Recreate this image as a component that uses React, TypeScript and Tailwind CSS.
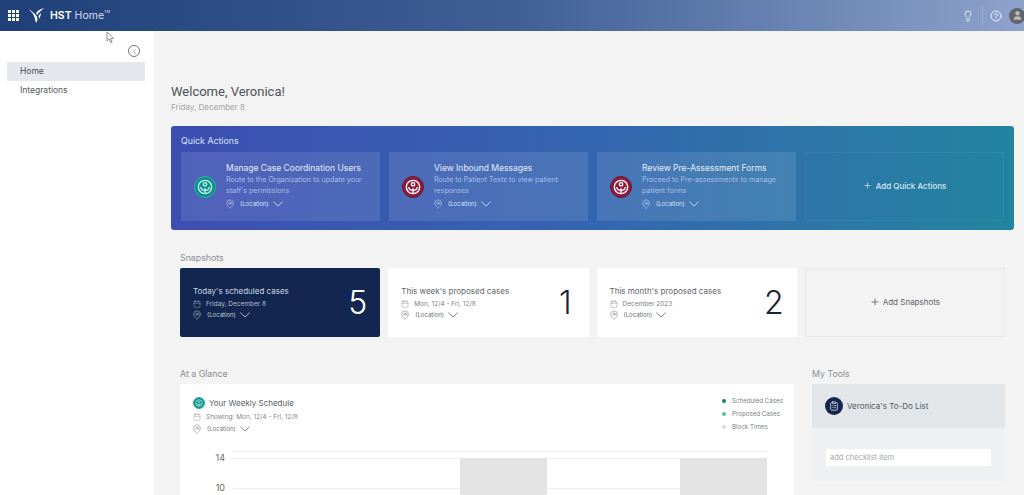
import { Lightbulb, CircleHelp, User, ChevronLeft, MapPin, Calendar, Plus, ClipboardList } from 'lucide-react';

const quickActions = [
  { title: 'Manage Case Coordination Users', lines: ['Route to the Organization to update your', "staff's permissions"], teal: true },
  { title: 'View Inbound Messages', lines: ['Route to Patient Texts to view patient', 'responses'], teal: false },
  { title: 'Review Pre-Assessment Forms', lines: ['Proceed to Pre-assessments to manage', 'patient forms'], teal: false },
];

const snapshots = [
  { title: "Today's scheduled cases", date: 'Friday, December 8', count: '5', dark: true, pad: 'pr-[13px]' },
  { title: "This week's proposed cases", date: 'Mon, 12/4 - Fri, 12/8', count: '1', dark: false, pad: 'pr-[17px]' },
  { title: "This month's proposed cases", date: 'December 2023', count: '2', dark: false, pad: 'pr-[13px]' },
];

const legend = [
  { label: 'Scheduled Cases', dot: 'bg-[#12826f]' },
  { label: 'Proposed Cases', dot: 'bg-[#5cbf9c]' },
  { label: 'Block Times', dot: 'bg-[#dcdcdc]' },
];

function AppGrid() {
  return (
    <svg width="11" height="11" viewBox="0 0 11 11" fill="white">
      {[0, 4, 8].map((y) =>
        [0, 4, 8].map((x) => <rect key={`${x}-${y}`} x={x} y={y} width="3" height="3" />)
      )}
    </svg>
  );
}

function LogoMark() {
  return (
    <svg width="16" height="17" viewBox="0 0 16 17" fill="white">
      <path d="M0 2 C2 5 4 6 5 9 C6 11 6 13 7 16 C8 14 9 13 8 10 C7 7 3 5 0 2 Z" />
      <path d="M15 1 C12 2 9 3 8 5 C7 6 7 7 8 8 C9 6 12 4 15 1 Z" />
      <path d="M12 6 C11 7 10 8 9.5 9 C9.5 10 10 11 10 12 C11 10 12 8 12 6 Z" />
    </svg>
  );
}

function WideChevron() {
  return (
    <svg width="10" height="6" viewBox="0 0 10 6" fill="none" stroke="currentColor" strokeWidth="0.9">
      <path d="M0.3 0.6 L5 5 L9.7 0.6" />
    </svg>
  );
}

function PersonBadge({ teal, size = 'normal' }: { teal: boolean; size?: 'normal' | 'small' }) {
  const outer = size === 'small' ? 'w-[12px] h-[12px]' : 'w-[22px] h-[22px]';
  const color = teal ? 'bg-[#0f8f8e] border-[#2fae9f]' : 'bg-[#8f1c3d] border-[#6d1531]';
  return (
    <div className={`${outer} ${color} rounded-full flex items-center justify-center border shrink-0`}>
      <svg viewBox="0 0 24 24" className="w-[80%] h-[80%]" fill="none" stroke={teal ? '#bff5e6' : 'white'} strokeWidth="2">
        <circle cx="12" cy="12" r="10" />
        <circle cx="12" cy="8" r="2.6" />
        <path d="M12 22 V14 M5.5 12 C6 16 9 17 12 17 C15 17 18 16 18.5 12" />
      </svg>
    </div>
  );
}

function Location({ tone }: { tone: string }) {
  return (
    <div className={`flex items-center ${tone}`}>
      <MapPin size={10} strokeWidth={1.2} className="mr-[5px] -ml-[1px]" />
      <span className="text-[6px] leading-none mr-[4px]">(Location)</span>
      <WideChevron />
    </div>
  );
}

function Section({ label, children }: { label: string; children: React.ReactNode }) {
  return (
    <div>
      <div className="text-[8.8px] leading-[11px] text-[#8a8f94] mb-[5px]">{label}</div>
      {children}
    </div>
  );
}

export default function App() {
  return (
    <div className="relative w-[1024px] h-[495px] overflow-hidden bg-[#f3f3f3] font-['Inter',sans-serif]">
      {/* header */}
      <header className="h-[31px] flex items-center pl-[8px] bg-gradient-to-r from-[#1f3f78] via-[#3f5f95] via-50% to-[#8ea3cc]">
        <AppGrid />
        <div className="ml-[10px]"><LogoMark /></div>
        <span className="ml-[5px] text-[10.5px] font-semibold text-white">HST</span>
        <span className="ml-[3px] text-[10.5px] text-[#d5deee]">Home</span>
        <span className="text-[4px] text-[#d5deee] self-start mt-[9px]">TM</span>
        <div className="ml-auto flex items-center -mr-[1px]">
          <Lightbulb size={12} className="text-[#e8eef8] mr-[8px]" />
          <div className="w-px h-[18px] bg-[#9db0d2] mr-[7px]" />
          <CircleHelp size={12} className="text-[#e8eef8] mr-[7px]" />
          <div className="w-[16px] h-[16px] rounded-full bg-[#5e6472] flex items-center justify-center">
            <User size={11} className="text-[#c9b8a8]" fill="#c9b8a8" />
          </div>
        </div>
      </header>

      <div className="flex h-[464px]">
        {/* sidebar */}
        <aside className="w-[154px] bg-white pt-[14px] pl-[7px] pr-[9px] shrink-0">
          <div className="flex justify-end pr-[5px] mb-[5px]">
            <div className="w-[12px] h-[12px] rounded-full border border-[#777] flex items-center justify-center">
              <ChevronLeft size={9} strokeWidth={1.5} className="text-[#666]" />
            </div>
          </div>
          <div className="h-[19px] bg-[#e6e7ec] pl-[13px] flex items-center text-[8.5px] text-[#4a4f55]">Home</div>
          <div className="h-[19px] pl-[13px] flex items-center text-[8.5px] text-[#555a60]">Integrations</div>
        </aside>

        {/* main */}
        <main className="flex-1 pl-[17px] pr-[10px] pt-[52px]">
          <h1 className="text-[13px] leading-[17px] text-[#4d5156] font-['Roboto',sans-serif]">Welcome, Veronica!</h1>
          <div className="text-[8px] leading-[10px] mt-[2px] text-[#a3a5a8]">Friday, December 8</div>

          {/* quick actions */}
          <section className="mt-[14px] h-[104px] rounded-[3px] px-[10px] pt-[9px] bg-gradient-to-r from-[#3d4eb2] via-[#3465b0] via-50% to-[#23849f]">
            <div className="text-[8.8px] leading-[11px] text-[#d8e3f5]">Quick Actions</div>
            <div className="mt-[6px] grid grid-cols-4 gap-x-[9px]">
              {quickActions.map((a) => (
                <div key={a.title} className="h-[69px] bg-white/10 flex items-center pl-[13px]">
                  <PersonBadge teal={a.teal} />
                  <div className="ml-[10px] self-start pt-[11px]">
                    <div className="text-[8.5px] leading-[11px] text-[#e4ebf8]">{a.title}</div>
                    {a.lines.map((l) => (
                      <div key={l} className="text-[7.1px] leading-[11px] text-[#a9bde8]">{l}</div>
                    ))}
                    <div className="mt-[3px]"><Location tone="text-[#d5e0f4]" /></div>
                  </div>
                </div>
              ))}
              <div className="h-[69px] pb-[2px] border border-white/5 flex items-center justify-center text-[8px] font-medium text-[#d6e6f2]">
                <Plus size={9} className="mr-[4px]" />
                Add Quick Actions
              </div>
            </div>
          </section>

          {/* snapshots */}
          <div className="mt-[22px] ml-[9px] mr-[9px]">
            <Section label="Snapshots">
              <div className="grid grid-cols-4 gap-x-[8px]">
                {snapshots.map((s) => (
                  <div key={s.title} className={`h-[69px] flex items-center pl-[13px] ${s.pad} ${s.dark ? 'bg-[#12264f] rounded-[2px]' : 'bg-white'}`}>
                    <div className="flex-1">
                      <div className={`text-[8px] leading-[12px] ${s.dark ? 'text-[#cfd6e4]' : 'text-[#62666b]'}`}>{s.title}</div>
                      <div className={`flex items-center mt-[2px] ${s.dark ? 'text-[#b6bfd0]' : 'text-[#7b7f84]'}`}>
                        <Calendar size={8} strokeWidth={1.2} className="mr-[5px]" />
                        <span className="text-[6.5px] leading-[10px]">{s.date}</span>
                      </div>
                      <div className="mt-[1px]"><Location tone={s.dark ? 'text-[#c4ccdb]' : 'text-[#6b6f74]'} /></div>
                    </div>
                    <div className={`text-[32px] font-light leading-none ${s.dark ? 'text-white' : 'text-[#1b2333]'}`}>{s.count}</div>
                  </div>
                ))}
                <div className="h-[69px] pb-[2px] border border-[#e9e9e9] flex items-center justify-center text-[8px] text-[#5f6368]">
                  <Plus size={10} className="mr-[3px]" />
                  Add Snapshots
                </div>
              </div>
            </Section>
          </div>

          {/* bottom row */}
          <div className="mt-[31px] ml-[9px] flex">
            <div className="w-[614px]">
              <Section label="At a Glance">
                <div className="h-[120px] bg-white px-[13px] pt-[13px] relative">
                  <div className="flex justify-between">
                    <div>
                      <div className="flex items-center">
                        <PersonBadge teal size="small" />
                        <span className="ml-[4px] text-[8px] leading-[12px] text-[#5a5e63]">Your Weekly Schedule</span>
                      </div>
                      <div className="flex items-center mt-[3px] text-[#85898e]">
                        <Calendar size={8} strokeWidth={1.2} className="mr-[5px]" />
                        <span className="text-[6.5px] leading-[10px]">Showing: Mon, 12/4 - Fri, 12/8</span>
                      </div>
                      <div className="mt-[2px]"><Location tone="text-[#777b80]" /></div>
                    </div>
                    <div className="-mt-[3px]">
                      {legend.map((l) => (
                        <div key={l.label} className="flex items-center h-[13px]">
                          <span className={`w-[4px] h-[4px] rounded-full ${l.dot} mr-[6px]`} />
                          <span className="text-[6.2px] whitespace-nowrap text-[#7c8085] w-[49px]">{l.label}</span>
                        </div>
                      ))}
                    </div>
                  </div>
                  {/* chart */}
                  <div className="mt-[17px] relative h-[50px]">
                    <div className="border-t border-[#f0f0f0] ml-[39px] mr-[14px]" />
                    <div className="flex items-center">
                      <span className="w-[32px] text-right text-[9px] leading-[12px] text-[#666]">14</span>
                      <div className="flex-1 ml-[7px] mr-[14px] border-t border-[#eee]" />
                    </div>
                    <div className="flex items-center mt-[18px]">
                      <span className="w-[32px] text-right text-[9px] leading-[12px] text-[#666]">10</span>
                      <div className="flex-1 ml-[7px] mr-[14px] border-t border-[#eee]" />
                    </div>
                    <div className="absolute left-[267px] top-[7px] w-[87px] h-[50px] bg-[#e3e3e3]" />
                    <div className="absolute left-[487px] top-[7px] w-[87px] h-[50px] bg-[#e3e3e3]" />
                  </div>
                </div>
              </Section>
            </div>
            <div className="ml-[18px] w-[193px]">
              <Section label="My Tools">
                <div className="h-[97px] bg-[#eef0f1]">
                  <div className="h-[44px] bg-[#e3e6e9] flex items-center pl-[13px]">
                    <div className="w-[18px] h-[18px] rounded-full bg-[#12264f] flex items-center justify-center">
                      <ClipboardList size={10} className="text-[#cfd6e4]" />
                    </div>
                    <span className="ml-[4px] text-[8px] text-[#555a60]">Veronica's To-Do List</span>
                  </div>
                  <div className="mt-[21px] mx-[14px] h-[17px] bg-white flex items-center pl-[4px] text-[7.5px] text-[#a5a7aa]">
                    add checklist item
                  </div>
                </div>
              </Section>
            </div>
          </div>
        </main>
      </div>

      {/* mouse pointer from the capture */}
      <svg width="9" height="13" viewBox="0 0 9 13" className="absolute left-[106px] top-[31px]" fill="white" stroke="#777" strokeWidth="0.8">
        <path d="M1 1 L1 10 L3.2 8 L4.8 11.6 L6.2 11 L4.6 7.6 L7.6 7.4 Z" />
      </svg>
    </div>
  );
}
